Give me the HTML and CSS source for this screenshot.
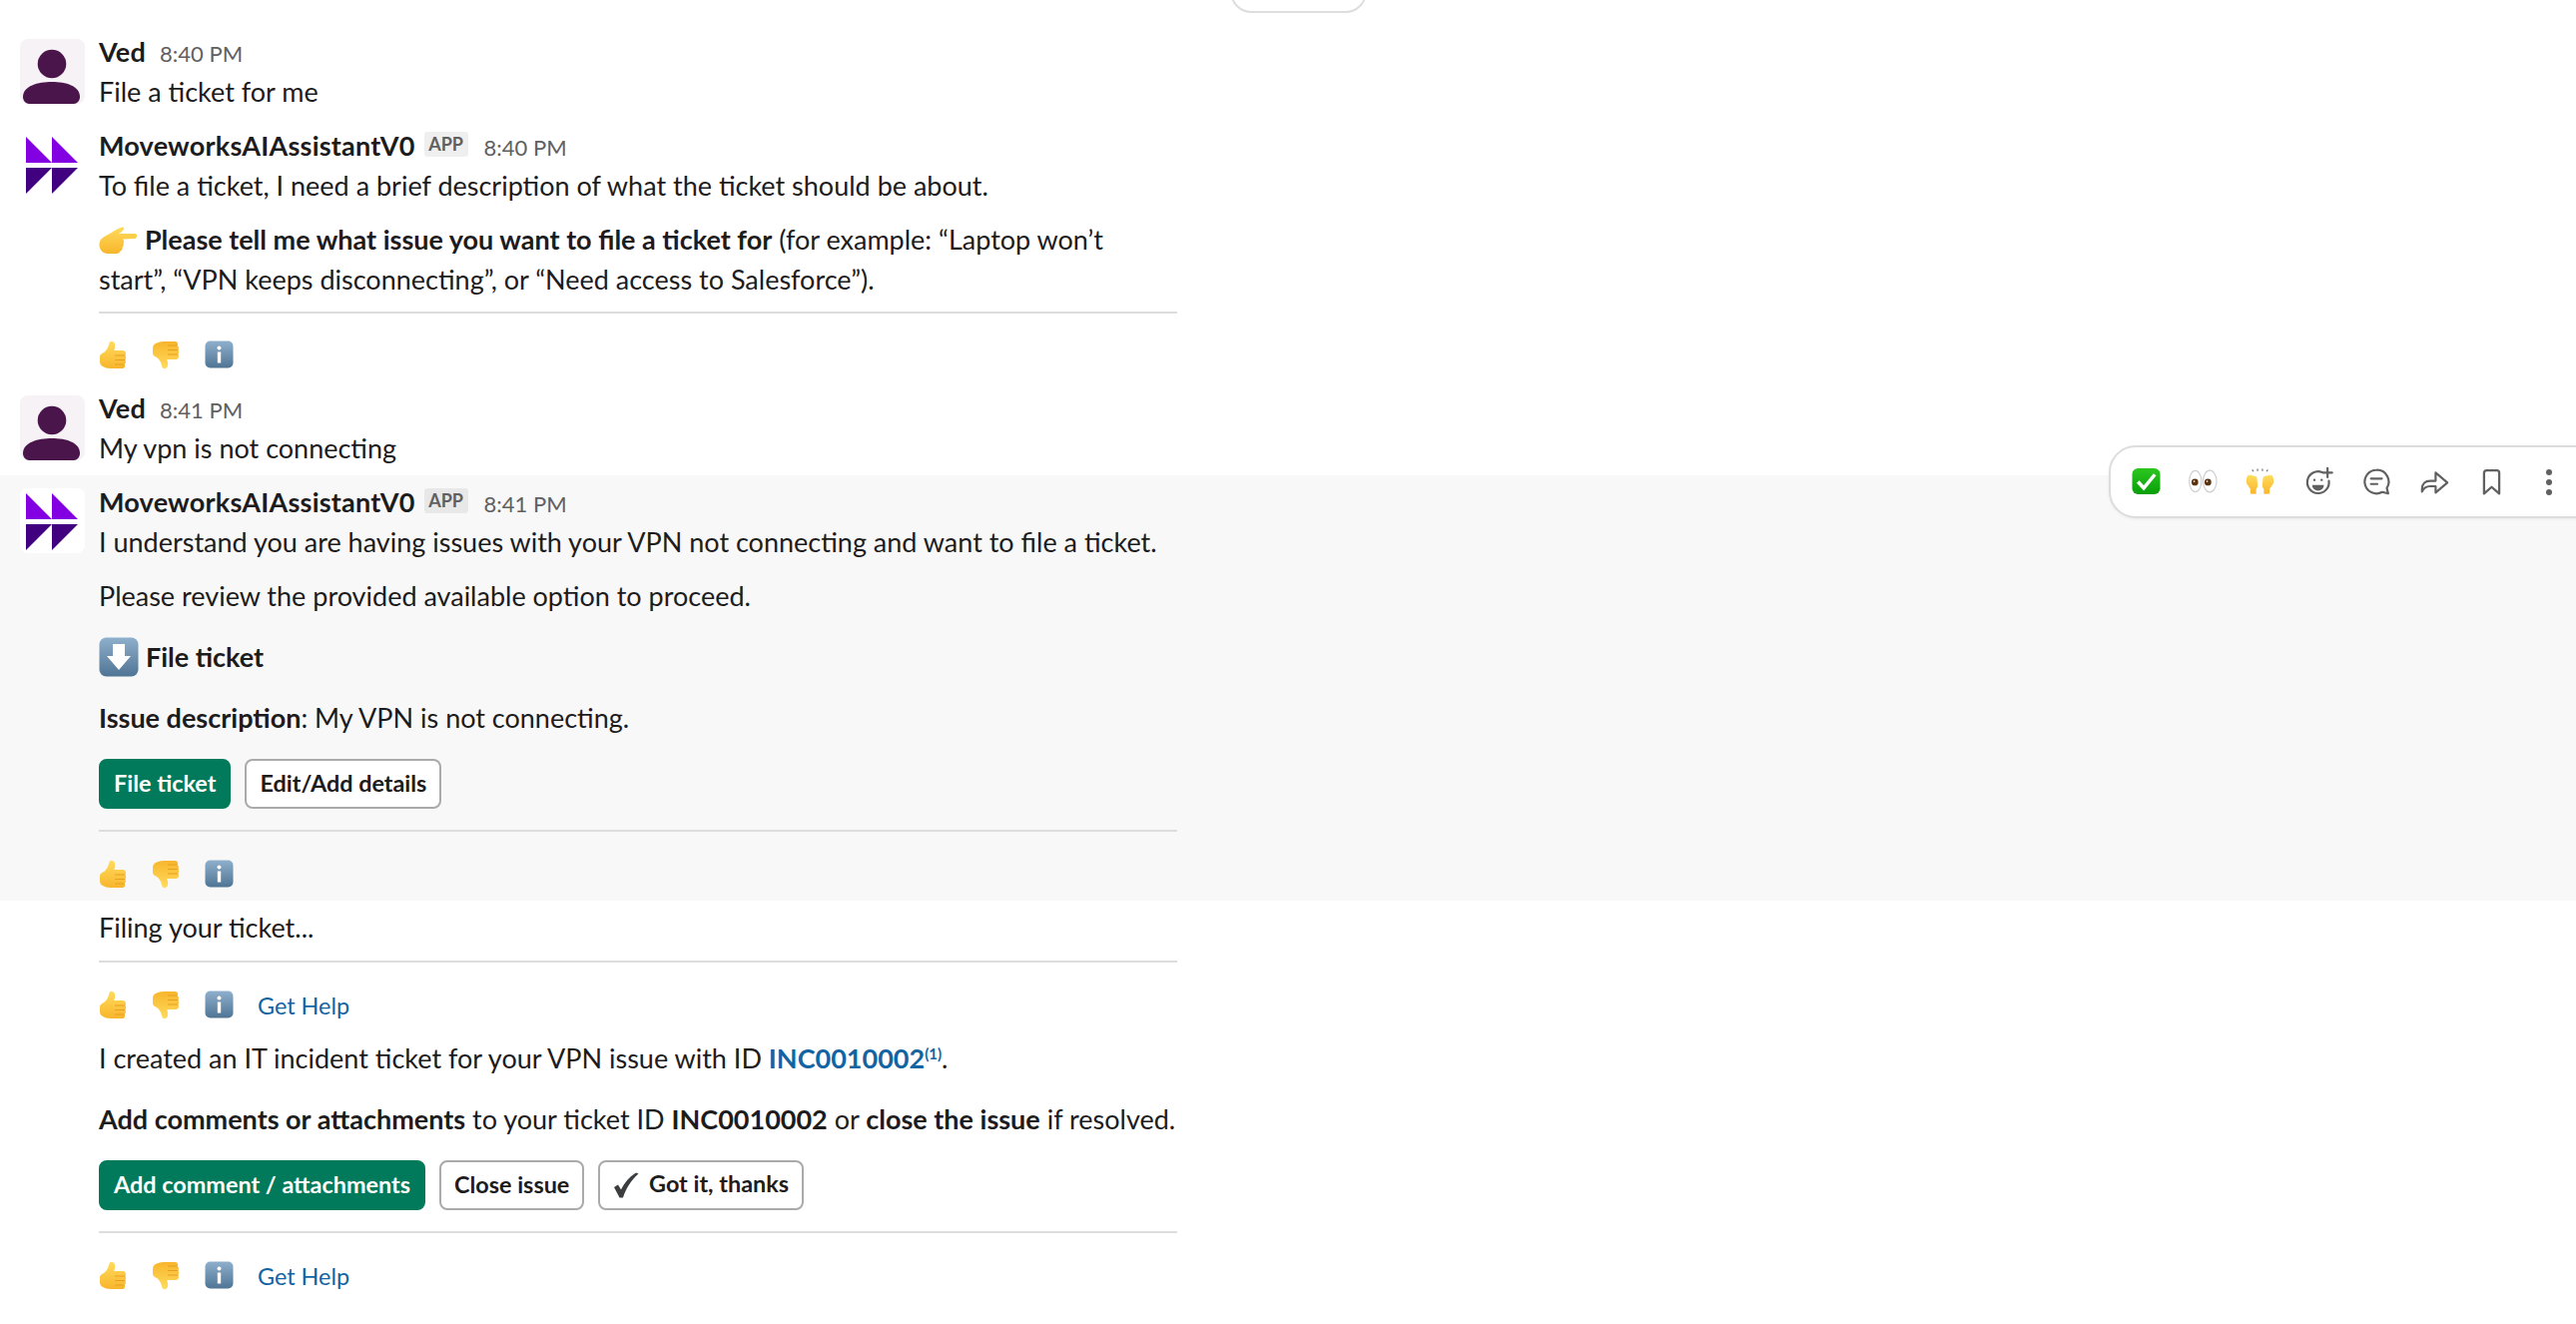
FILE: index.html
```html
<!DOCTYPE html>
<html lang="en">
<head>
<meta charset="utf-8">
<title>MoveworksAIAssistantV0</title>
<link rel="stylesheet" href="styles.css">
</head>
<body>
<svg class="defs" width="0" height="0" aria-hidden="true">
  <defs>
    <linearGradient id="gold" x1="0" y1="0" x2="0" y2="1"><stop offset="0" stop-color="#ffdc5c"/><stop offset="1" stop-color="#f8b52c"/></linearGradient>
    <linearGradient id="steel" x1="0" y1="0" x2="0" y2="1"><stop offset="0" stop-color="#8fb0cc"/><stop offset="1" stop-color="#4f7494"/></linearGradient>
    <linearGradient id="green" x1="0" y1="0" x2="0" y2="1"><stop offset="0" stop-color="#2cc71f"/><stop offset="1" stop-color="#0a9e0a"/></linearGradient>
    <symbol id="up" viewBox="0 0 28 29">
      <path d="M1 16C1 14 3 13 5 12 7 10.500 9 8 10 4 10.500 1 12 .5 13.500 1 16 1.500 16.500 4 16 7L15.300 10H24C26 10 27 11.500 27 13 27 14 26.600 14.600 26 15 26.800 15.600 27.200 16.400 27.200 17.300 27.200 18.300 26.700 19 26 19.500 26.600 20 27 20.800 27 21.600 27 22.600 26.400 23.300 25.600 23.800 26 24.200 26.200 24.800 26.200 25.400 26.200 26.900 25 28 23.400 28H12C8 28 6 27 4 26 2 25 1 23.500 1 21z" fill="url(#gold)"/>
      <path d="M16 15h10.500M16 19.500h10.500M16 24h9.500" stroke="#e8a020" stroke-width="1.100" fill="none"/>
    </symbol>
    <symbol id="down" viewBox="0 0 28 29">
      <g transform="matrix(1 0 0 -1 0 29)">
        <path d="M1 16C1 14 3 13 5 12 7 10.500 9 8 10 4 10.500 1 12 .5 13.500 1 16 1.500 16.500 4 16 7L15.300 10H24C26 10 27 11.500 27 13 27 14 26.600 14.600 26 15 26.800 15.600 27.200 16.400 27.200 17.300 27.200 18.300 26.700 19 26 19.500 26.600 20 27 20.800 27 21.600 27 22.600 26.400 23.300 25.600 23.800 26 24.200 26.200 24.800 26.200 25.400 26.200 26.900 25 28 23.400 28H12C8 28 6 27 4 26 2 25 1 23.500 1 21z" fill="url(#gold)"/>
        <path d="M16 15h10.500M16 19.500h10.500M16 24h9.500" stroke="#e8a020" stroke-width="1.100" fill="none"/>
      </g>
    </symbol>
    <symbol id="info" viewBox="0 0 29 28">
      <rect x=".5" y=".5" width="28" height="27" rx="5" fill="url(#steel)"/>
      <circle cx="14.500" cy="7.500" r="2" fill="#fff"/>
      <rect x="12.800" y="11.500" width="3.400" height="11" fill="#fff"/>
    </symbol>
    <symbol id="point" viewBox="0 0 39 28">
      <path d="M.5 17C1 12 5 10 9 8 13 6 18 2 23 .5 25 0 26 2 24.500 3.500 23 5 21 6.500 20 7L36 7C38 7 38.500 8.500 38 10 37.500 11.500 36.500 12 35 12L24 12.500C25.500 13.500 25.500 16 24.500 17 25 18.500 24.500 20 23.500 20.500 24 22 23 24 21.500 24.500 21 26 19.500 27 18 27H9C4 27 0 23 .5 17z" fill="url(#gold)"/>
    </symbol>
    <symbol id="arrow" viewBox="0 0 40 40">
      <rect x=".5" y=".5" width="39" height="39" rx="7" fill="url(#steel)"/>
      <path d="M14 7h12v12h6L20 33 8 19h6z" fill="#fff"/>
    </symbol>
    <symbol id="check" viewBox="0 0 30 28">
      <rect x=".5" y=".5" width="29" height="27" rx="6" fill="url(#green)"/>
      <path d="M6.500 14.500l6 6.500L24 7" stroke="#fff" stroke-width="3.600" fill="none"/>
    </symbol>
    <symbol id="eyes" viewBox="0 0 30 24">
      <ellipse cx="7" cy="12" rx="6.300" ry="11" fill="#fff" stroke="#cfcfcf" stroke-width="1.200"/>
      <ellipse cx="22" cy="12" rx="7" ry="11.200" fill="#fff" stroke="#cfcfcf" stroke-width="1.200"/>
      <circle cx="6.500" cy="13" r="3.500" fill="#5a3210"/>
      <circle cx="20" cy="13" r="3.500" fill="#5a3210"/>
      <circle cx="5.700" cy="12" r=".9" fill="#fff"/>
      <circle cx="19.200" cy="12" r=".9" fill="#fff"/>
    </symbol>
    <symbol id="hands" viewBox="0 0 30 28">
      <path d="M5 27v-5L1 16c-.6-3 .3-7 1.500-8 1-.8 1.500-.3 1.700.6.300-1.400 2.500-1.400 2.800 0 .6-.9 2.300-.7 2.700.4.900-.3 2 .2 2.100 1.300l.8 7c.2 2-.5 3.500-1.600 5v5zM25 27v-5l4-6c.6-3-.3-7-1.500-8-1-.8-1.500-.3-1.700.6-.3-1.400-2.500-1.400-2.800 0-.6-.9-2.300-.7-2.700.4-.9-.3-2 .2-2.100 1.300l-.8 7c-.2 2 .5 3.500 1.600 5v5z" fill="url(#gold)"/>
      <path d="M7 2l1 2M12.500 1v2.500M17.500 1v2.500M23 2l-1 2" stroke="#777" stroke-width="1.300" fill="none"/>
    </symbol>
    <symbol id="tick" viewBox="0 0 26 26">
      <path d="M1 15l4-2.500 3 5C11.500 10.500 16 5 23 .5L25.500 1.500C18 8 13 16 10 25.500H6.500z" fill="#3b3d3f"/>
    </symbol>
    <symbol id="person" viewBox="0 0 65 65">
      <rect width="65" height="65" fill="#f6f2f6"/>
      <circle cx="32" cy="25" r="14.300" fill="#4a154b"/>
      <path d="M3 58C3 47 18 43 32 43S60 47 60 58C60 62 57 65 54 65H9C6 65 3 62 3 58z" fill="#4a154b"/>
    </symbol>
    <symbol id="bot" viewBox="0 0 65 65">
      <rect width="65" height="65" fill="#fff"/>
      <path d="M6 5l26 26H6zM32 5l26 26H32z" fill="#8300e3"/>
      <path d="M6 36h26L6 62zM32 36h26L32 62z" fill="#40007f"/>
    </symbol>
  </defs>
</svg>

<div class="pill"></div>

<main class="thread">
  <article class="msg">
    <svg class="avatar"><use href="#person"/></svg>
    <div class="body">
      <div class="head"><strong class="name">Ved</strong><span class="time">8:40 PM</span></div>
      <p class="text">File a ticket for me</p>
    </div>
  </article>

  <article class="msg msg-bot">
    <svg class="avatar avatar-bot"><use href="#bot"/></svg>
    <div class="body">
      <div class="head"><strong class="name">MoveworksAIAssistantV0</strong><span class="badge">APP</span><span class="time">8:40 PM</span></div>
      <p class="text">To file a ticket, I need a brief description of what the ticket should be about.</p>
      <p class="text gap"><svg class="em-point"><use href="#point"/></svg> <b>Please tell me what issue you want to file a ticket for</b> (for example: “Laptop won’t start”, “VPN keeps disconnecting”, or “Need access to Salesforce”).</p>
      <hr class="rule">
      <div class="feedback">
        <svg class="em-thumb"><use href="#up"/></svg>
        <svg class="em-thumb"><use href="#down"/></svg>
        <svg class="em-info"><use href="#info"/></svg>
      </div>
    </div>
  </article>

  <article class="msg">
    <svg class="avatar"><use href="#person"/></svg>
    <div class="body">
      <div class="head"><strong class="name">Ved</strong><span class="time">8:41 PM</span></div>
      <p class="text">My vpn is not connecting</p>
    </div>
  </article>

  <article class="msg msg-hover">
    <svg class="avatar avatar-bot"><use href="#bot"/></svg>
    <div class="body">
      <div class="head"><strong class="name">MoveworksAIAssistantV0</strong><span class="badge">APP</span><span class="time">8:41 PM</span></div>
      <p class="text">I understand you are having issues with your VPN not connecting and want to file a ticket.</p>
      <p class="text gap">Please review the provided available option to proceed.</p>
      <p class="text heading"><svg class="em-arrow"><use href="#arrow"/></svg> <b>File ticket</b></p>
      <p class="text issue"><b>Issue description</b>: My VPN is not connecting.</p>
      <div class="actions">
        <button class="btn btn-primary">File ticket</button>
        <button class="btn">Edit/Add details</button>
      </div>
      <hr class="rule rule-tight">
      <div class="feedback feedback-low">
        <svg class="em-thumb"><use href="#up"/></svg>
        <svg class="em-thumb"><use href="#down"/></svg>
        <svg class="em-info"><use href="#info"/></svg>
      </div>
    </div>
    <div class="toolbar">
      <svg class="tb-emoji"><use href="#check"/></svg>
      <svg class="tb-emoji"><use href="#eyes"/></svg>
      <svg class="tb-emoji tb-last"><use href="#hands"/></svg>
      <svg class="tb-icon" viewBox="0 0 32 32" fill="none" stroke="#616061" stroke-width="2.400" stroke-linecap="round"><path d="M19 5.500A12 12 0 1 0 26.500 15"/><path d="M25 1v10M20 6h10"/><circle cx="10.500" cy="14" r="1.300" fill="#616061" stroke="none"/><circle cx="18.500" cy="14" r="1.300" fill="#616061" stroke="none"/><path d="M8 19.500h13a6.500 6.500 0 0 1-13 0z" fill="#616061" stroke="none"/></svg>
      <svg class="tb-icon" viewBox="0 0 32 32" fill="none" stroke="#616061" stroke-width="2.400" stroke-linecap="round" stroke-linejoin="round"><path d="M15 3a13 13 0 1 0 6.500 24.300L28 29l-1.500-6A13 13 0 0 0 15 3z"/><path d="M9 12.500h12M9 18.500h7"/></svg>
      <svg class="tb-icon tb-share" viewBox="0 0 32 32" fill="none" stroke="#616061" stroke-width="2.400" stroke-linecap="round" stroke-linejoin="round"><path d="M2 27v-3c0-6 4-9 9-9h6V6l13 11-13 11v-7h-6c-4 0-7 1-9 6z"/></svg>
      <svg class="tb-icon tb-mark" viewBox="0 0 20 28" fill="none" stroke="#616061" stroke-width="2.400" stroke-linejoin="round"><path d="M2 4a2.500 2.500 0 0 1 2.500-2.500h11A2.500 2.500 0 0 1 18 4v22l-8-7-8 7z"/></svg>
      <svg class="tb-icon tb-dots" viewBox="0 0 8 28" fill="#616061"><circle cx="4" cy="4" r="3"/><circle cx="4" cy="14" r="3"/><circle cx="4" cy="24" r="3"/></svg>
    </div>
  </article>

  <section class="cont cont-filing">
    <p class="text">Filing your ticket...</p>
    <hr class="rule rule-filing">
    <div class="feedback feedback-low">
      <svg class="em-thumb"><use href="#up"/></svg>
      <svg class="em-thumb"><use href="#down"/></svg>
      <svg class="em-info"><use href="#info"/></svg>
      <a class="help" href="#">Get Help</a>
    </div>
  </section>

  <section class="cont cont-result">
    <p class="text">I created an IT incident ticket for your VPN issue with ID <a class="ref" href="#">INC0010002<sup>(1)</sup></a>.</p>
    <p class="text issue"><b>Add comments or attachments</b> to your ticket ID <b>INC0010002</b> or <b>close the issue</b> if resolved.</p>
    <div class="actions">
      <button class="btn btn-primary">Add comment / attachments</button>
      <button class="btn">Close issue</button>
      <button class="btn"><svg class="em-tick"><use href="#tick"/></svg> Got it, thanks</button>
    </div>
    <hr class="rule rule-tight">
    <div class="feedback feedback-low">
      <svg class="em-thumb"><use href="#up"/></svg>
      <svg class="em-thumb"><use href="#down"/></svg>
      <svg class="em-info"><use href="#info"/></svg>
      <a class="help" href="#">Get Help</a>
    </div>
  </section>
</main>
</body>
</html>
```

FILE: styles.css
```css
* { box-sizing: border-box; }

html, body {
  margin: 0;
  height: 100%;
  overflow: hidden;
  background: #fff;
}

body {
  position: relative;
  font-family: Lato, "Noto Sans", sans-serif;
  font-size: 27px;
  line-height: 40px;
  color: #1d1c1d;
}

.defs { position: absolute; }

.pill {
  position: absolute;
  left: 1232px;
  top: -30px;
  width: 137px;
  height: 43px;
  background: #fff;
  border: 2px solid #ddd;
  border-radius: 22px;
}

.thread {
  display: flex;
  flex-direction: column;
  padding-top: 25px;
}

.msg {
  position: relative;
  display: flex;
  gap: 14px;
  padding: 7px 20px;
}

.msg-bot { padding-bottom: 12px; }

.msg-hover {
  background: #f8f8f8;
  padding-bottom: 12px;
}

.avatar {
  flex: none;
  width: 65px;
  height: 65px;
  margin-top: 7px;
  border-radius: 8px;
}

.avatar-bot { margin-top: 6px; }

.body {
  width: 1080px;
  min-width: 0;
}

.head {
  display: flex;
  align-items: baseline;
  height: 40px;
}

.name {
  font-weight: 700;
  letter-spacing: .22px;
}

.time {
  margin-left: 14px;
  font-size: 22px;
  color: #616061;
}

.badge {
  align-self: flex-start;
  margin: 6px 0 0 9px;
  width: 44px;
  height: 25px;
  line-height: 25px;
  text-align: center;
  font-size: 18px;
  font-weight: 700;
  color: #616061;
  background: #1d1c1d12;
  border-radius: 3px;
}

.badge + .time { margin-left: 16px; }

.text { margin: 0; }
.gap { margin-top: 14px; }
.heading { margin-top: 21px; height: 40px; }
.issue { margin-top: 21px; }

.rule {
  margin: 12px 0 0;
  border: 0;
  border-top: 2px solid #ddd;
}

.rule-tight { margin-top: 21px; }
.rule-filing { margin-top: 13px; }

.feedback {
  display: flex;
  align-items: flex-start;
  margin-top: 27px;
  height: 29px;
}

.feedback-low { margin-top: 28px; }

.em-thumb {
  width: 28px;
  height: 29px;
  margin-right: 25px;
}

.em-info {
  width: 29px;
  height: 28px;
}

.em-point {
  width: 39px;
  height: 28px;
  vertical-align: -5px;
}

.em-arrow {
  width: 40px;
  height: 40px;
  vertical-align: -10px;
}

.em-tick {
  width: 26px;
  height: 26px;
  margin-right: 4px;
  vertical-align: -6px;
}

.help {
  margin-left: 24px;
  font-size: 23.4px;
  line-height: 30px;
  color: #1264a3;
  text-decoration: none;
}

.ref {
  font-weight: 700;
  color: #1264a3;
  text-decoration: none;
}

.ref sup {
  font-size: 15px;
  line-height: 0;
  vertical-align: 9px;
}

.actions {
  display: flex;
  gap: 14px;
  margin-top: 21px;
}

.btn {
  height: 50px;
  padding: 0 13px;
  font: 700 23.4px/1 Lato, "Noto Sans", sans-serif;
  color: #1d1c1d;
  background: #fff;
  border: 2px solid #aaa;
  border-radius: 8px;
}

.btn-primary {
  color: #fff;
  background: #007a5a;
  border-color: #007a5a;
}

.cont {
  padding-left: 99px;
  width: 1179px;
}

.cont-filing { padding-top: 7px; }

.cont-result { padding-top: 19px; }

.toolbar {
  position: absolute;
  left: 2112px;
  top: -30px;
  display: flex;
  align-items: center;
  width: 500px;
  height: 73px;
  padding-left: 21px;
  background: #fff;
  border: 2px solid #ddd;
  border-radius: 27px;
  box-shadow: 0 1px 3px #0000000f;
}

.tb-emoji {
  flex: none;
  width: 29px;
  height: 28px;
  margin-right: 28px;
  margin-bottom: 2px;
}

.tb-last { margin-right: 30px; }

.tb-icon {
  flex: none;
  width: 30px;
  height: 29px;
  margin-right: 28px;
}

.tb-share {
  width: 29px;
  margin-right: 33px;
}

.tb-mark {
  width: 19px;
  height: 28px;
  margin-right: 44px;
}

.tb-dots {
  width: 8px;
  height: 28px;
  margin: 0;
}
```
